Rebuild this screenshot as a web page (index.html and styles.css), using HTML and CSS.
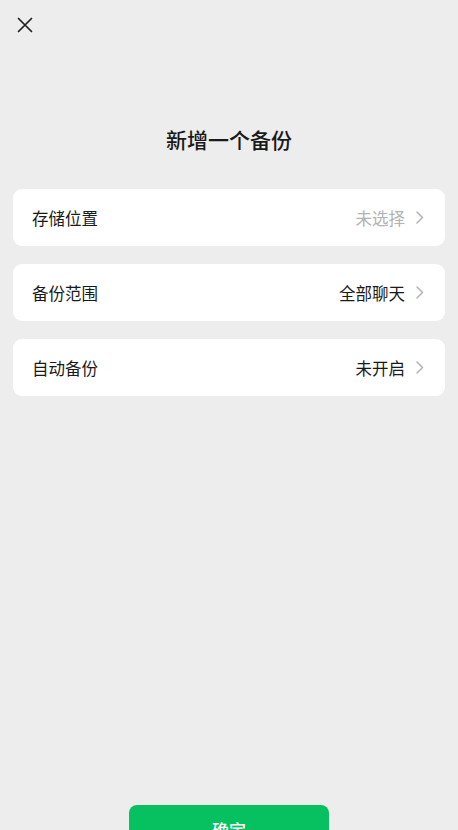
FILE: index.html
```
<!DOCTYPE html>
<html lang="zh-CN">
<head>
<meta charset="utf-8">
<title>新增一个备份</title>
<link rel="stylesheet" href="styles.css">
</head>
<body>
<div class="page">
  <div class="topbar">
    <svg class="close" width="16" height="16" viewBox="0 0 16 16" aria-label="关闭">
      <path d="M1.5 1.5 L14.5 14.5 M14.5 1.5 L1.5 14.5" fill="none" stroke="#1f1f1f" stroke-width="1.7" stroke-linecap="round"/>
    </svg>
  </div>
  <h1 class="title">新增一个备份</h1>
  <div class="list">
    <div class="cell">
      <span class="label">存储位置</span>
      <span class="right"><span class="value muted">未选择</span><svg class="chev" width="8" height="13" viewBox="0 0 8 13"><path d="M1 1 L6.5 6.5 L1 12" fill="none" stroke="#b3b3b3" stroke-width="1.5" stroke-linecap="round" stroke-linejoin="round"/></svg></span>
    </div>
    <div class="cell">
      <span class="label">备份范围</span>
      <span class="right"><span class="value">全部聊天</span><svg class="chev" width="8" height="13" viewBox="0 0 8 13"><path d="M1 1 L6.5 6.5 L1 12" fill="none" stroke="#b3b3b3" stroke-width="1.5" stroke-linecap="round" stroke-linejoin="round"/></svg></span>
    </div>
    <div class="cell">
      <span class="label">自动备份</span>
      <span class="right"><span class="value">未开启</span><svg class="chev" width="8" height="13" viewBox="0 0 8 13"><path d="M1 1 L6.5 6.5 L1 12" fill="none" stroke="#b3b3b3" stroke-width="1.5" stroke-linecap="round" stroke-linejoin="round"/></svg></span>
    </div>
  </div>
  <div class="footer">
    <button class="confirm">确定</button>
  </div>
</div>
</body>
</html>
```
FILE: styles.css
```
html, body {
  margin: 0;
  padding: 0;
  background: #ededed;
}
body {
  font-family: "Noto Sans CJK SC", "Noto Sans", sans-serif;
  color: #1a1a1a;
  overflow: hidden;
}
.page {
  height: 830px;
  overflow: hidden;
}
.topbar {
  height: 50px;
  padding: 17px 0 0 17px;
  box-sizing: border-box;
}
.close {
  display: block;
}
.title {
  margin: 74px 0 0;
  height: 30px;
  line-height: 30px;
  font-size: 21px;
  font-weight: 500;
  text-align: center;
  color: #1a1a1a;
}
.list {
  margin: 35px 13px 0;
  display: flex;
  flex-direction: column;
  gap: 18px;
}
.cell {
  height: 57px;
  background: #ffffff;
  border-radius: 9px;
  display: flex;
  align-items: center;
  justify-content: space-between;
  padding: 0 21px 0 19px;
  font-size: 16.5px;
}
.label {
  color: #1a1a1a;
}
.right {
  display: flex;
  align-items: center;
  gap: 11px;
}
.value {
  color: #1a1a1a;
}
.value.muted {
  color: #b2b2b2;
}
.chev {
  display: block;
}
.footer {
  margin-top: 409px;
  display: flex;
  justify-content: center;
}
.confirm {
  width: 200px;
  height: 48px;
  border: none;
  border-radius: 8px;
  background: #07c160;
  color: #ffffff;
  font-family: "Noto Sans CJK SC", "Noto Sans", sans-serif;
  font-size: 17px;
  font-weight: 500;
}
```
